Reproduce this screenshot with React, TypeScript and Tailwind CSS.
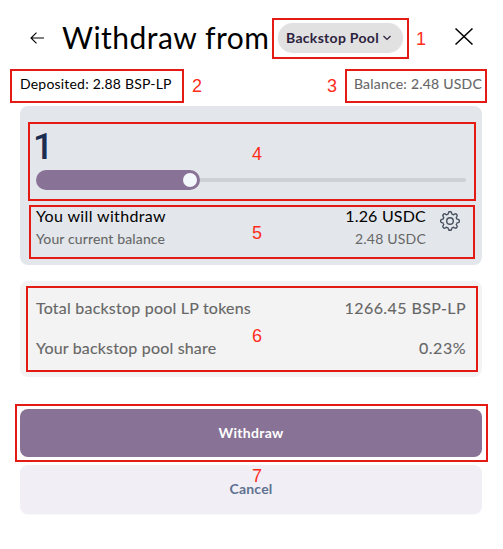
import type { ReactNode } from "react";

// Outline of an eight-toothed cog with softly rounded teeth.
const GEAR =
  Array.from({ length: 128 }, (_, i) => {
    const a = (i / 128) * Math.PI * 2;
    const r = 8.2 + 1.1 * Math.max(-1, Math.min(1, 1.5 * Math.cos(8 * a)));
    return `${i ? "L" : "M"}${(10 + r * Math.cos(a)).toFixed(2)} ${(10 + r * Math.sin(a)).toFixed(2)}`;
  }).join("") + "Z";

function Marker({ frame, digit, children }: { frame: string; digit: string; children: ReactNode }) {
  return (
    <>
      <div className={`pointer-events-none absolute border-2 border-[#e31b14] ${frame}`} />
      <span className={`pointer-events-none absolute font-['Liberation_Sans',sans-serif] text-[18px] leading-[20px] text-[#ff2d1c] ${digit}`}>
        {children}
      </span>
    </>
  );
}

export default function App() {
  return (
    <div className="relative h-[549px] w-[503px] overflow-hidden bg-white font-['Lato',sans-serif] text-black">
      <header className="flex h-[68px] items-start pl-[30px] pt-[23px]">
        <svg className="mt-[9px] h-3 w-[14px] shrink-0" viewBox="0 0 14 12" fill="none" stroke="black" strokeWidth="1.1">
          <path d="M14 6H1M6.5 .7L1 6l5.500 5.300" />
        </svg>
        <h1 className="-mt-px ml-[18px] w-[216px] shrink-0 whitespace-nowrap text-[30px] leading-[30px] tracking-[0.48px]">Withdraw from</h1>
        <button className="flex h-[30px] w-[125px] shrink-0 items-center rounded-full bg-[#e1e1e1] pl-2 text-[14px] font-bold leading-5 text-[#2d1f3d] shadow-[0_0_2px_rgba(0,0,0,0.06)]">
          <span className="w-[93px] whitespace-nowrap text-left tracking-[0.3px]">Backstop Pool</span>
          <svg className="ml-1 h-[6px] w-[8px]" viewBox="0 0 8 6" fill="none" stroke="currentColor" strokeWidth="1.2">
            <path d="M.5 1L4 4.500 7.500 1" />
          </svg>
        </button>
        <svg className="ml-[52px] mt-[5px] h-[17px] w-[18px] shrink-0" viewBox="0 0 18 17" fill="none" stroke="black" strokeWidth="1.5">
          <path d="M.5 .5l17 16M17.500 .5l-17 16" />
        </svg>
      </header>
      <div className="ml-5 mr-[21px] flex h-[38px] justify-between pt-[6px] text-[14px] leading-5">
        <span className="tracking-[0.2px]">Deposited: 2.88 BSP-LP</span>
        <span className="tracking-[0.22px] text-[#666666] [-webkit-text-stroke:0.1px]">Balance: 2.48 USDC</span>
      </div>
      <main className="ml-5 w-[462px]">
        <section className="h-[159px] rounded-lg bg-[#e3e6eb] px-4 pt-[22px]">
          <div className="-ml-[3px] h-[42px] font-['Roboto',sans-serif] text-[36px] font-medium leading-[39px] text-[#1b2e52]">1</div>
          <div className="flex h-5 items-center">
            <div className="flex h-5 w-[164px] items-center justify-end rounded-full bg-[#887396] pr-[3px]">
              <div className="h-[14px] w-[14px] rounded-full bg-[#f3f8fa]" />
            </div>
            <div className="h-1 flex-1 rounded-r-full bg-[#cdd1d6]" />
          </div>
          <div className="mt-[15px] flex">
            <div className="flex-1">
              <p className="text-[16px] leading-[22px] tracking-[0.36px]">You will withdraw</p>
              <p className="pt-px text-[14px] leading-[22px] tracking-[0.14px] text-[#666666] [-webkit-text-stroke:0.1px]">Your current balance</p>
            </div>
            <div className="text-right">
              <p className="text-[16px] leading-[22px] tracking-[0.2px]">1.26 USDC</p>
              <p className="pt-px text-[14px] leading-[22px] tracking-[0.2px] text-[#666666]">2.48 USDC</p>
            </div>
            <svg className="ml-[14px] mr-[6px] mt-[6px] h-5 w-5" viewBox="0 0 20 20" fill="none" stroke="#46505e" strokeWidth="1.4" strokeLinejoin="round">
              <path d={GEAR} />
              <circle cx="10" cy="10" r="3.300" />
            </svg>
          </div>
        </section>
        <section className="mt-4 h-24 rounded-lg bg-[#f3f3f3] px-4 pt-[7px] text-[16px] leading-10 text-[#666666] [-webkit-text-stroke:0.12px]">
          <div className="flex justify-between">
            <span className="tracking-[0.22px]">Total backstop pool LP tokens</span>
            <span className="tracking-[0.42px]">1266.45 BSP-LP</span>
          </div>
          <div className="flex justify-between">
            <span className="tracking-[0.18px]">Your backstop pool share</span>
            <span className="tracking-[0.5px]">0.23%</span>
          </div>
        </section>
        <button className="mt-8 block h-12 w-full rounded-lg bg-[#887396] pb-0.5 text-[14px] font-bold tracking-[0.3px] text-white">Withdraw</button>
        <button className="mt-2 block h-[49px] w-full rounded-lg bg-[#f1eff5] pb-0.5 text-[14px] font-bold tracking-[0.2px] text-[#5f7190] shadow-[0_1px_1px_rgba(0,0,0,0.03)]">Cancel</button>
      </main>
      <Marker frame="left-[272px] top-[18px] h-[41px] w-[137px]" digit="left-[416px] top-[29px]">1</Marker>
      <Marker frame="left-[10px] top-[69px] h-[34px] w-[174px]" digit="left-[192px] top-[76px]">2</Marker>
      <Marker frame="left-[345px] top-[69px] h-[34px] w-[142px]" digit="left-[327px] top-[76px]">3</Marker>
      <Marker frame="left-[28px] top-[122px] h-[79px] w-[448px]" digit="left-[252px] top-[144px]">4</Marker>
      <Marker frame="left-[29px] top-[205px] h-[54px] w-[446px]" digit="left-[252px] top-[223px]">5</Marker>
      <Marker frame="left-[26px] top-[286px] h-[86px] w-[452px]" digit="left-[252px] top-[326px]">6</Marker>
      <Marker frame="left-[15px] top-[404px] h-[58px] w-[473px]" digit="left-[252px] top-[466px]">7</Marker>
    </div>
  );
}
